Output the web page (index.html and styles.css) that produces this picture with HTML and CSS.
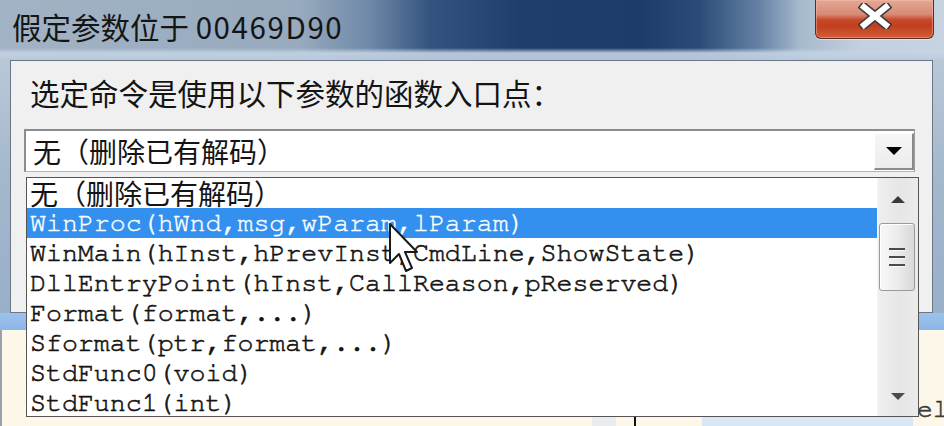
FILE: index.html
```html
<!DOCTYPE html>
<html lang="zh-CN">
<head>
<meta charset="utf-8">
<title>假定参数位于 00469D90</title>
<link rel="stylesheet" href="styles.css">
</head>
<body>
<div class="desktop">
  <div class="bgapp">
    <div class="bg-edge"></div>
    <div class="bg-row">
      <span class="gap g1"></span>
      <span class="blk"></span>
      <span class="gap g2"></span>
      <span class="vline"></span>
      <span class="gap g3"></span>
      <span class="blue"></span>
      <span class="bg-text">el</span>
    </div>
  </div>

  <div class="dialog">
    <div class="titlebar">
      <div class="title"><span class="title-cjk">假定参数位于</span> <span class="title-num">00469D90</span></div>
      <div class="close-btn">
        <svg width="34" height="26" viewBox="0 0 34 26" aria-hidden="true">
          <path d="M6 4 L28 22 M28 4 L6 22" stroke="#3d3a3a" stroke-width="9" stroke-linecap="square" fill="none"/>
          <path d="M6 4 L28 22 M28 4 L6 22" stroke="#ffffff" stroke-width="6" stroke-linecap="square" fill="none"/>
        </svg>
      </div>
    </div>
    <div class="frame">
      <div class="client">
        <div class="prompt">选定命令是使用以下参数的函数入口点<span class="colon">：</span></div>
        <div class="combo">
          <div class="combo-value">无（删除已有解码）</div>
          <div class="combo-btn"><span class="tri-down"></span></div>
        </div>
      </div>
    </div>
  </div>

  <div class="droplist">
    <ul class="options">
      <li class="opt cjk">无（删除已有解码）</li>
      <li class="opt sel">WinProc(hWnd,msg,wParam,lParam)</li>
      <li class="opt">WinMain(hInst,hPrevInst,CmdLine,ShowState)</li>
      <li class="opt">DllEntryPoint(hInst,CallReason,pReserved)</li>
      <li class="opt">Format(format,...)</li>
      <li class="opt">Sformat(ptr,format,...)</li>
      <li class="opt">StdFunc0(void)</li>
      <li class="opt">StdFunc1(int)</li>
    </ul>
    <div class="vscroll">
      <div class="sb-btn up"><span class="sb-up"></span></div>
      <div class="sb-track">
        <div class="sb-thumb"><i></i><i></i><i></i></div>
      </div>
      <div class="sb-btn down"><span class="sb-down"></span></div>
    </div>
  </div>

  <svg class="cursor" width="32" height="52" viewBox="0 0 32 52" aria-hidden="true">
    <polygon points="2,2 2,41 11,32 18,49 24,46 17,30 29,30" fill="#ffffff" stroke="#1a1a1a" stroke-width="2" stroke-linejoin="round"/>
  </svg>
</div>
</body>
</html>
```

FILE: styles.css
```css
* { box-sizing: border-box; }
html, body { margin: 0; padding: 0; }
body {
  width: 944px;
  height: 426px;
  overflow: hidden;
  background: #fcf7e9;
  font-family: "Noto Sans CJK SC", sans-serif;
}
.desktop {
  position: relative;
  width: 944px;
  height: 426px;
  overflow: hidden;
}

/* background application window */
.bgapp {
  position: absolute;
  left: 0;
  top: 326px;
  width: 944px;
  height: 100px;
  background: #fcf7e9;
  border-top: 2px solid #7d8b9b;
  display: flex;
}
.bg-edge {
  width: 5px;
  background: #eef0f2;
  border-right: 2px solid #9aa2aa;
}
.bg-row {
  flex: 1;
  display: flex;
  align-items: flex-end;
}
.gap { height: 9px; }
.g1 { width: 590px; }
.blk { width: 24px; height: 9px; background: #e9ecef; }
.g2 { width: 18px; }
.vline { width: 2px; height: 9px; background: #111; }
.g3 { width: 66px; }
.blue { width: 211px; height: 9px; background: #d9e6f3; }
.bg-text {
  font-family: "FreeMono", "Nimbus Mono PS", "Nimbus Mono L", "Courier New", "Liberation Mono", monospace;
  font-size: 26.4px;
  line-height: 30px;
  color: #3a3a3a;
  -webkit-text-stroke: 0.6px #3a3a3a;
  white-space: nowrap;
  margin-bottom: 2px;
  margin-left: 4px;
}

/* dialog window */
.dialog {
  position: absolute;
  left: 0;
  top: 0;
  width: 954px;
  height: 330px;
  display: flex;
  flex-direction: column;
}
.titlebar {
  height: 60px;
  display: flex;
  align-items: flex-start;
  background:
    linear-gradient(180deg, rgba(200,214,230,0) 0, rgba(200,214,230,0) 48px, rgba(196,211,228,.9) 53px, rgba(186,202,220,.95) 60px),
    linear-gradient(90deg, #a2b3c5 0, #97aabe 300px, #6e88a7 370px, #34547f 430px, #1f3e6a 520px, #1d3c68 640px, #2c4c78 700px, #6683a6 760px, #a6b9cd 800px, #c3d0de 860px, #c6d3e1 954px);
}
.title {
  position: relative;
  margin-top: 8px;
  padding-left: 12px;
  font-size: 29.5px;
  line-height: 36px;
  color: #151515;
  white-space: nowrap;
}
.title::before {
  content: "";
  position: absolute;
  left: -6px;
  right: -14px;
  top: -4px;
  bottom: -2px;
  background: rgba(214,223,233,.9);
  filter: blur(9px);
  z-index: -1;
}
.title-num { letter-spacing: 1.6px; }
.close-btn {
  margin-left: auto;
  margin-right: 20px;
  width: 119px;
  height: 39px;
  border: 1px solid #5e2a20;
  border-top: none;
  border-radius: 0 0 6px 6px;
  background: linear-gradient(180deg, #e3a898 0%, #d98a74 38%, #c8492b 52%, #c13f1f 68%, #d35d37 100%);
  box-shadow: inset 0 0 0 1px rgba(255,190,170,.45), 0 1px 0 rgba(255,255,255,.45);
  display: flex;
  justify-content: center;
  padding-top: 3px;
}

.frame {
  flex: 1;
  display: flex;
  padding: 0 21px 17px 10px;
  background:
    linear-gradient(180deg, rgba(0,0,0,0) 0, rgba(0,0,0,0) 253px, #9cc2ec 253px, #8cb6e6 270px),
    linear-gradient(180deg, #b9c8d8 0, #a4b7cb 45%, #97afc9 100%);
}
.client {
  flex: 1;
  border: 1px solid #6a7684;
  background: #f0f0f0;
  padding: 14px 0 0 13px;
}
.prompt {
  padding-left: 6px;
  font-size: 29.5px;
  line-height: 34px;
  color: #141414;
  white-space: nowrap;
}
.colon { font-family: "Noto Sans CJK TC", "Noto Sans CJK SC", sans-serif; }
.combo {
  margin-top: 20px;
  width: 891px;
  height: 43px;
  display: flex;
  background: #fff;
  border-top: 2px solid #8d8d8d;
  border-left: 2px solid #8d8d8d;
  border-right: 1px solid #9e9e9e;
  border-bottom: 1px solid #b4b4b4;
}
.combo-value {
  flex: 1;
  padding-left: 7px;
  padding-top: 1px;
  font-size: 28px;
  line-height: 38px;
  color: #141414;
  white-space: nowrap;
}
.combo-btn {
  width: 40px;
  height: 37px;
  margin-top: 2px;
  background: linear-gradient(180deg, #f6f6f6, #ececec);
  border-top: 1px solid #ffffff;
  border-left: 1px solid #ffffff;
  border-right: 2px solid #8a8a8a;
  border-bottom: 2px solid #8a8a8a;
  display: flex;
  align-items: center;
  justify-content: center;
}
.tri-down {
  width: 0;
  height: 0;
  border-left: 8px solid transparent;
  border-right: 8px solid transparent;
  border-top: 8px solid #000;
}

/* drop-down list overlay */
.droplist {
  position: absolute;
  left: 26px;
  top: 177px;
  width: 893px;
  height: 240px;
  border: 1px solid #555;
  background: #fff;
  display: flex;
}
.options {
  flex: 1;
  list-style: none;
  margin: 0;
  padding: 0;
}
.opt {
  height: 30px;
  line-height: 30px;
  padding-left: 3px;
  font-family: "FreeMono", "Nimbus Mono PS", "Nimbus Mono L", "Courier New", "Liberation Mono", monospace;
  font-size: 26.6px;
  color: #141414;
  -webkit-text-stroke: 0.6px #141414;
  white-space: nowrap;
}
.opt.cjk {
  font-family: "Noto Sans CJK SC", sans-serif;
  font-size: 28px;
  -webkit-text-stroke: 0;
}
.opt.sel {
  background: #3490ee;
  color: #fff;
  -webkit-text-stroke: 0.4px #fff;
}
.vscroll {
  width: 41px;
  display: flex;
  flex-direction: column;
  border-left: 1px solid #f7f7f7;
  background: linear-gradient(90deg, #efefef, #e6e6e6 55%, #ebebeb);
}
.sb-btn {
  height: 42px;
  display: flex;
  align-items: center;
  justify-content: center;
}
.sb-btn.down { height: 40px; }
.sb-up {
  width: 0;
  height: 0;
  border-left: 7px solid transparent;
  border-right: 7px solid transparent;
  border-bottom: 7px solid #3a3a3a;
}
.sb-down {
  width: 0;
  height: 0;
  border-left: 7px solid transparent;
  border-right: 7px solid transparent;
  border-top: 7px solid #4a4a4a;
}
.sb-track { flex: 1; }
.sb-thumb {
  margin: 3px 3px 0 1px;
  height: 68px;
  border: 1px solid #9a9a9a;
  border-radius: 3px;
  background: linear-gradient(90deg, #f8f8f8, #ececec 50%, #d8d8d8);
  box-shadow: inset 1px 1px 0 #fff;
  display: flex;
  flex-direction: column;
  align-items: center;
  justify-content: center;
  gap: 6px;
}
.sb-thumb i {
  display: block;
  width: 16px;
  height: 2px;
  background: #4b4b4b;
  box-shadow: 0 1px 0 #fafafa;
}

.cursor {
  position: absolute;
  left: 388px;
  top: 222px;
  filter: blur(0.6px);
}
```
